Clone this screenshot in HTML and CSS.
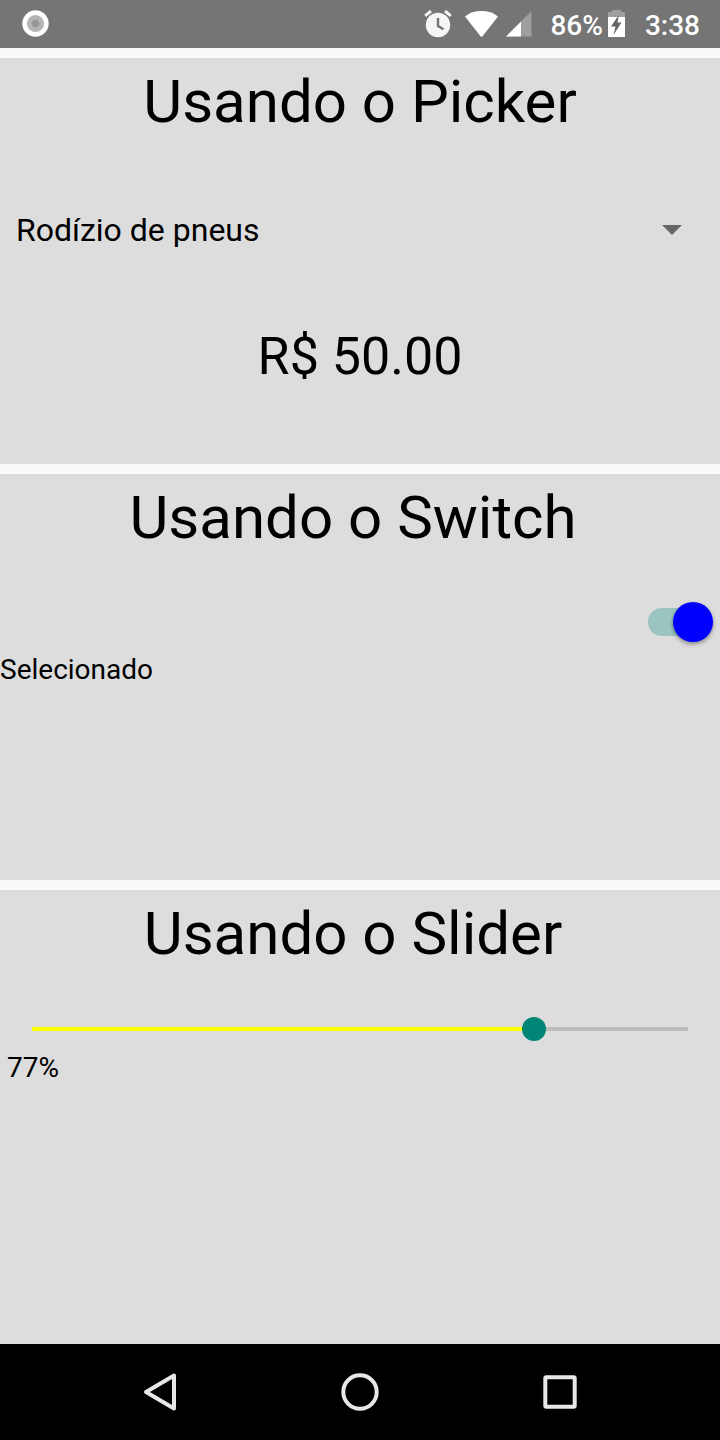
FILE: index.html
```html
<!DOCTYPE html>
<html lang="pt-BR">
<head>
<meta charset="utf-8">
<meta name="viewport" content="width=device-width, initial-scale=1">
<title>Componentes</title>
<link rel="stylesheet" href="styles.css">
</head>
<body>
<header class="status">
  <svg class="status-record" width="28" height="28" viewBox="0 0 28 28" aria-hidden="true">
    <circle cx="13.500" cy="13.500" r="13.2" fill="#fff"/>
    <circle cx="13.500" cy="13.500" r="8.6" fill="#b5b5b5"/>
    <circle cx="13.500" cy="13.500" r="3.8" fill="#979797"/>
  </svg>
  <svg class="status-alarm" width="28" height="28" viewBox="0 0 28 28" aria-hidden="true">
    <circle cx="14" cy="15" r="12.2" fill="#f5f5f5"/>
    <path d="M1.2 5.800 7 1M26.800 5.800 21 1" stroke="#f5f5f5" stroke-width="3" fill="none"/>
    <path d="M14 8v8l5.500 3.200" stroke="#757575" stroke-width="2.4" fill="none"/>
  </svg>
  <svg class="status-wifi" width="33" height="26" viewBox="0 0 33 26" aria-hidden="true">
    <path d="M0 5.4C9-1.8 24-1.8 33 5.4L17.5 25.2Q16.5 26.4 15.500 25.200Z" fill="#fff"/>
  </svg>
  <svg class="status-signal" width="26" height="26" viewBox="0 0 26 26" aria-hidden="true">
    <path d="M0 25.500 25.500 0V25.500Z" fill="#9f9f9f"/>
    <path d="M0 25.500 15 10.500V25.500Z" fill="#fff"/>
  </svg>
  <span class="status-level">86%</span>
  <svg class="status-battery" width="17" height="28" viewBox="0 0 17 28" aria-hidden="true">
    <path d="M4 0h9v2h4v5H0V2h4Z" fill="#9f9f9f"/>
    <path d="M0 7h17v20H0Z" fill="#fff"/>
    <path d="M10.800 5 3 16.500h4.500L5.500 25 13.500 12.500H9.500Z" fill="#666"/>
  </svg>
  <time class="status-time">3:38</time>
</header>

<main class="content">
  <section class="panel">
    <h1 class="title">Usando o Picker</h1>
    <div class="picker">
      <select class="picker-select" aria-label="Serviço">
        <option selected>Rodízio de pneus</option>
      </select>
      <svg class="picker-arrow" width="20" height="10" viewBox="0 0 20 10" aria-hidden="true"><path d="M0 0h20L10 10Z" fill="#666"/></svg>
    </div>
    <p class="price">R$ 50.00</p>
  </section>

  <section class="panel">
    <h1 class="title title-spaced">Usando o Switch</h1>
    <div class="switch-row">
      <input class="switch" id="switch" type="checkbox" role="switch" checked>
    </div>
    <label class="caption" for="switch">Selecionado</label>
  </section>

  <section class="panel panel-last">
    <h1 class="title title-spaced">Usando o Slider</h1>
    <div class="slider-row">
      <input class="slider" id="slider" type="range" min="0" max="1" step="any" value="0.765">
    </div>
    <label class="caption caption-inset" for="slider">77%</label>
  </section>
</main>

<nav class="navbar" aria-label="Sistema">
  <button class="nav-button" aria-label="Voltar">
    <svg width="40" height="40" viewBox="0 0 40 40"><path d="M6 20 34 3.500V36.500Z" fill="none" stroke="#e8e8e8" stroke-width="4" stroke-linejoin="round"/></svg>
  </button>
  <button class="nav-button" aria-label="Início">
    <svg width="40" height="40" viewBox="0 0 40 40"><circle cx="20" cy="20" r="16.700" fill="none" stroke="#e8e8e8" stroke-width="4"/></svg>
  </button>
  <button class="nav-button" aria-label="Recentes">
    <svg width="40" height="40" viewBox="0 0 40 40"><rect x="5.300" y="5.300" width="29.400" height="29.400" rx="1" fill="none" stroke="#e8e8e8" stroke-width="4"/></svg>
  </button>
</nav>
</body>
</html>
```

FILE: styles.css
```css
* {
  box-sizing: border-box;
}

body {
  margin: 0;
  min-height: 100vh;
  display: flex;
  flex-direction: column;
  background: #fafafa;
  color: #000;
  font-family: Roboto, "Noto Sans", sans-serif;
}

.status {
  display: flex;
  align-items: center;
  height: 48px;
  padding: 0 20px 0 22px;
  background: #757575;
  color: #fff;
  font-size: 28px;
  font-weight: 500;
  line-height: 32px;
}

.status-alarm {
  margin-left: auto;
}

.status-wifi {
  margin-left: 13px;
}

.status-signal {
  margin-left: 8px;
}

.status-level {
  margin: 4px 0 0 18px;
}

.status-battery {
  margin-left: 5px;
}

.status-time {
  margin: 4px 0 0 20px;
}

.content {
  flex: 1;
  display: flex;
  flex-direction: column;
  gap: 10px;
  padding-top: 10px;
}

.panel {
  min-height: 406px;
  padding-top: 9px;
  background: #ddd;
}

.panel-last {
  flex: 1;
}

.title {
  margin: 0;
  font-size: 60px;
  font-weight: 400;
  line-height: 70px;
  text-align: center;
}

.title-spaced {
  padding-right: 14px;
}

.picker {
  position: relative;
  margin-top: 43px;
}

.picker-select {
  display: block;
  width: 100%;
  height: 100px;
  padding: 0 64px 0 16px;
  border: 0;
  background: transparent;
  color: inherit;
  font: 32px/40px Roboto, "Noto Sans", sans-serif;
  appearance: none;
}

.picker-arrow {
  position: absolute;
  top: 45px;
  right: 38px;
  pointer-events: none;
}

.price {
  margin: 47px 0 0;
  font-size: 52px;
  line-height: 60px;
  text-align: center;
}

.switch-row {
  display: flex;
  justify-content: flex-end;
  margin-top: 49px;
  padding-right: 7px;
}

.switch {
  position: relative;
  width: 65px;
  height: 40px;
  margin: 0;
  appearance: none;
}

.switch::before {
  content: "";
  position: absolute;
  inset: 6px 6px 6px 0;
  border-radius: 14px;
  background: #9bc3bf;
}

.switch::after {
  content: "";
  position: absolute;
  top: 0;
  left: 0;
  width: 40px;
  height: 40px;
  border-radius: 50%;
  background: #eee;
  box-shadow: 0 2px 4px rgba(0, 0, 0, 0.4);
}

.switch:checked::after {
  left: auto;
  right: 0;
  background: #00f;
}

.caption {
  display: block;
  margin-top: 12px;
  font-size: 28px;
  line-height: 32px;
}

.caption-inset {
  margin-top: 11px;
  padding-left: 7px;
}

.slider-row {
  margin-top: 48px;
  padding: 0 20px;
}

.slider {
  display: block;
  width: 100%;
  height: 24px;
  margin: 0;
  background: transparent;
  appearance: none;
}

.slider::-webkit-slider-runnable-track {
  height: 4px;
  background: linear-gradient(to right, transparent 12px, #ff0 12px, #ff0 75%, #bdbdbd 75%, #bdbdbd calc(100% - 12px), transparent calc(100% - 12px));
}

.slider::-webkit-slider-thumb {
  width: 24px;
  height: 24px;
  margin-top: -10px;
  border-radius: 50%;
  background: #008577;
  appearance: none;
}

.navbar {
  display: flex;
  justify-content: center;
  gap: 160px;
  height: 96px;
  background: #000;
}

.nav-button {
  display: flex;
  align-items: center;
  padding: 0;
  border: 0;
  background: none;
}
```
